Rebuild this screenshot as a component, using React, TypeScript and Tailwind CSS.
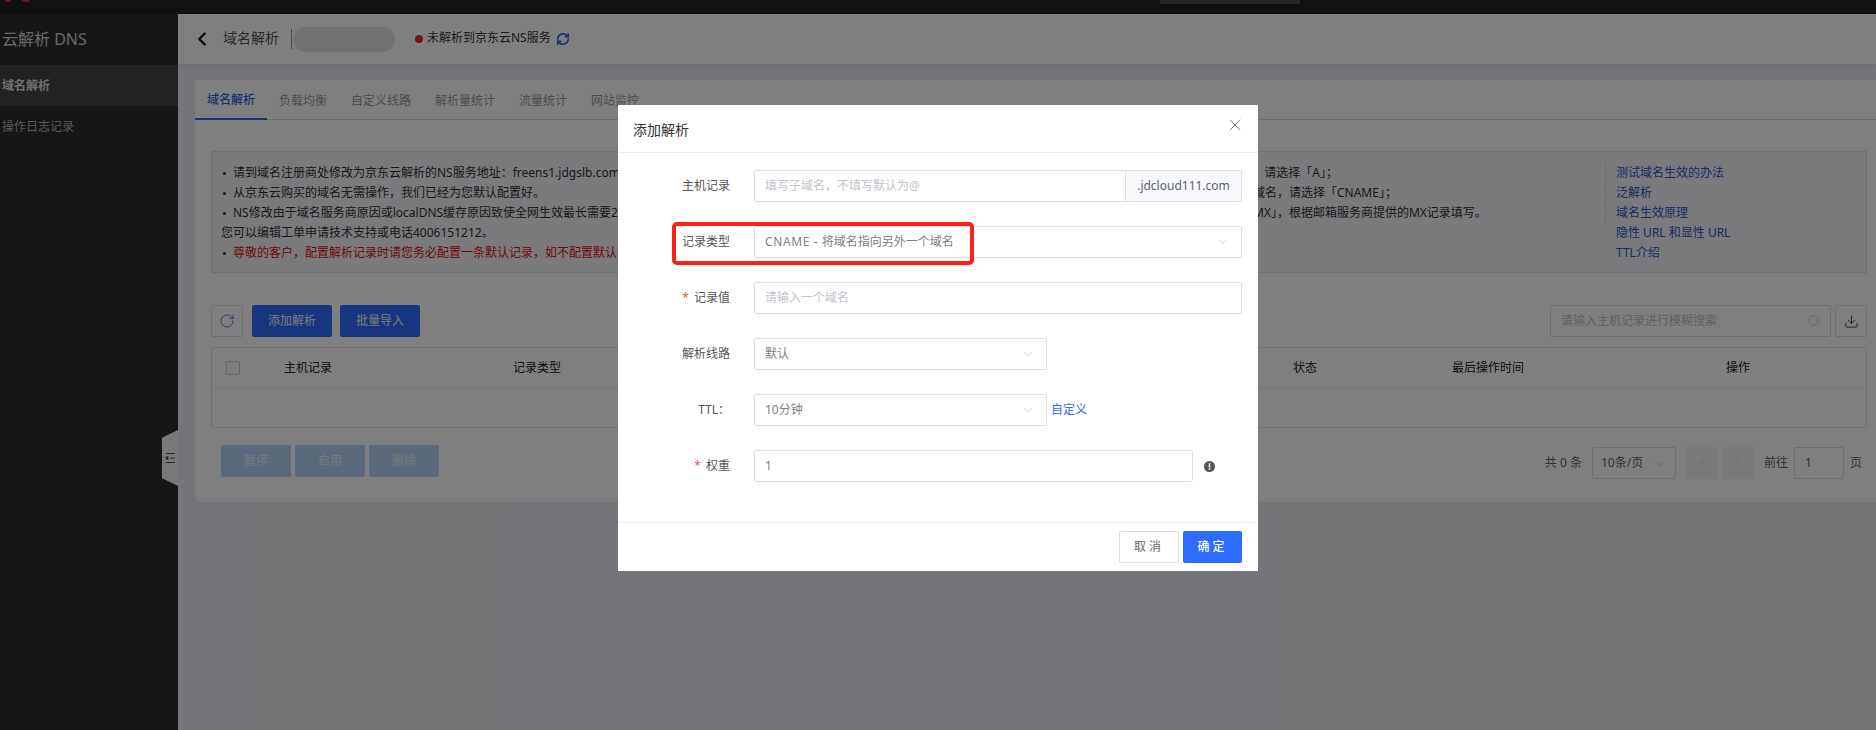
import { ChevronDown, ChevronLeft, ChevronRight, Download, RefreshCw, RotateCw, Search, X } from "lucide-react";

const tabs = ["域名解析", "负载均衡", "自定义线路", "解析量统计", "流量统计", "网站监控"];
const links = ["测试域名生效的办法", "泛解析", "域名生效原理", "隐性 URL 和显性 URL", "TTL介绍"];

function Bullet({ children, red }: { children: React.ReactNode; red?: boolean }) {
  return (
    <div className={red ? "flex h-5 items-center text-[#e01010]" : "flex h-5 items-center"}>
      <span className="mr-[7px] ml-[2px] h-[3px] w-[3px] shrink-0 rounded-full bg-[#333]" />
      <span>{children}</span>
    </div>
  );
}

function Row({ label, req, children }: { label: string; req?: boolean; children: React.ReactNode }) {
  return (
    <div className="flex h-8 items-center">
      <div className="flex w-[112px] shrink-0 items-center justify-end text-[#555]">
        {req && <span className="mr-[5px] text-[#f5534f]">*</span>}
        {label}
      </div>
      <div className="ml-6 flex flex-1 items-center">{children}</div>
    </div>
  );
}

function Select({ children, className }: { children: React.ReactNode; className: string }) {
  return (
    <div className={`flex h-8 items-center justify-between rounded-[2px] border border-[#dcdfe6] pr-[11px] pl-[10px] text-[#808080] ${className}`}>
      <span>{children}</span>
      <ChevronDown size={14} strokeWidth={1} className="text-[#b0b4bc]" />
    </div>
  );
}

export default function App() {
  return (
    <div className="relative h-[730px] w-[1876px] overflow-hidden bg-[#e9ebf0] font-['Noto_Sans','Noto_Sans_CJK_SC',sans-serif] text-xs text-[#333]">
      {/* top bar */}
      <div className="relative flex h-[14px] items-start bg-[#222]">
        <span className="ml-[5px] h-[2px] w-[6px] rounded-b-full bg-[#e03030]" />
        <span className="ml-[11px] h-[2px] w-[8px] rounded-b-full bg-[#e03030]" />
        <span className="ml-[1130px] h-[4px] w-[140px] bg-[#4a4a4a]" />
      </div>

      <div className="flex h-[716px]">
        {/* sidebar */}
        <aside className="relative w-[178px] shrink-0 bg-[#2c2c2c] text-[#c4c4c4]">
          <div className="flex h-[51px] items-center pb-[2px] pl-[2px] text-base text-[#d0d0d0]">云解析 DNS</div>
          <div className="flex h-[41px] items-center bg-[#444] pl-[2px] font-bold text-[#e0e0e0]">域名解析</div>
          <div className="flex h-[41px] items-center pl-[2px] text-[#b0b0b0]">操作日志记录</div>
          <div className="absolute top-[416px] right-0 flex h-[56px] w-[16px] items-center justify-center bg-[#f0f0f0] [clip-path:polygon(100%_0,100%_100%,0_86%,0_14%)]">
            <svg width="11" height="12" viewBox="0 0 11 12" fill="none" stroke="#555" strokeWidth="1.2">
              <path d="M1 1.5h9M5 6h5M1 10.5h9M1 6h3M3 4.2 1 6l2 1.8" />
            </svg>
          </div>
        </aside>

        <main className="min-w-0 flex-1">
          {/* header */}
          <header className="flex h-[50px] items-center bg-white pl-[13px] shadow-[0_4px_10px_rgba(0,0,0,0.08)]">
            <ChevronLeft size={22} strokeWidth={2.6} className="shrink-0 text-[#111]" />
            <span className="mb-[2px] ml-[10px] text-sm text-[#555]">域名解析</span>
            <span className="ml-3 h-5 w-px bg-[#999]" />
            <span className="ml-[1px] h-[25px] w-[102px] rounded-full bg-[#e4e4e4]" />
            <span className="ml-5 h-2 w-2 rounded-full bg-[#e8262d]" />
            <span className="mb-[2px] ml-1">未解析到京东云NS服务</span>
            <RefreshCw size={14} strokeWidth={3} className="ml-[5px] text-[#3a66d0]" />
          </header>

          {/* card */}
          <section className="mt-4 ml-[16px] h-[423px] rounded-bl-md border-b border-l border-[#e6e6e6] bg-white">
            <div className="flex h-[40px] border-b border-[#d8d8d8] bg-[#fff]">
              {tabs.map((t, i) => (
                <div key={t} className={i === 0 ? "-mb-px flex items-center border-b-2 border-[#2f66e8] px-3 pt-[2px] font-medium text-[#2f5fd8]" : "flex items-center px-3 pt-[2px] text-[#999]"}>
                  {t}
                </div>
              ))}
            </div>

            <div className="pt-[31px] pr-[9px] pl-[16px]">
              <div className="flex h-[122px] border border-[#dde0e8] bg-[#f4f5f8] pt-[11px] pl-[9px] whitespace-nowrap">
                <div className="w-[852px] shrink-0 overflow-hidden">
                  <Bullet>请到域名注册商处修改为京东云解析的NS服务地址：freens1.jdgslb.com，freens2.jdgslb.com；</Bullet>
                  <Bullet>从京东云购买的域名无需操作，我们已经为您默认配置好。</Bullet>
                  <Bullet>NS修改由于域名服务商原因或localDNS缓存原因致使全网生效最长需要24小时，请耐心等待；</Bullet>
                  <div className="flex h-5 items-center">您可以编辑工单申请技术支持或电话4006151212。</div>
                  <Bullet red>尊敬的客户，配置解析记录时请您务必配置一条默认记录，如不配置默认记录部分网络可能无法访问。</Bullet>
                </div>
                <div className="w-[532px] shrink-0">
                  <div className="flex h-5 items-center">如果您需要将域名指向一个IP地址，请选择「A」；</div>
                  <div className="flex h-5 items-center">如果您需要将主机名指向另外一个域名，请选择「CNAME」；</div>
                  <div className="flex h-5 items-center">如果需要设置企业邮箱，请选择「MX」，根据邮箱服务商提供的MX记录填写。</div>
                </div>
                <div className="mt-[1px] h-[60px] border-l border-dashed border-[#cfd2d8]" />
                <div className="ml-[10px] text-[#3354c8]">
                  {links.map((l) => (
                    <div key={l} className="flex h-5 items-center">{l}</div>
                  ))}
                </div>
              </div>

              {/* toolbar */}
              <div className="mt-[32px] flex h-8 items-center">
                <div className="flex h-8 w-8 items-center justify-center rounded-[2px] border border-[#dcdfe6]">
                  <RotateCw size={16} strokeWidth={1.2} className="text-[#3a5fd8]" />
                </div>
                <button className="ml-[9px] h-8 w-20 rounded-[2px] bg-[#2e6cff] text-[#f2f2f2]">添加解析</button>
                <button className="ml-2 h-8 w-20 rounded-[2px] bg-[#2e6cff] text-[#f2f2f2]">批量导入</button>
                <div className="ml-auto flex h-8 w-[281px] items-center justify-between rounded-[2px] border border-[#dcdfe6] pr-[9px] pl-[10px] text-[#c0c4cc]">
                  <span>请输入主机记录进行模糊搜索</span>
                  <Search size={14} strokeWidth={1} className="text-[#bbb]" />
                </div>
                <div className="ml-1 flex h-8 w-8 items-center justify-center rounded-[2px] border border-[#dcdfe6]">
                  <Download size={15} strokeWidth={1.5} className="text-[#444]" />
                </div>
              </div>

              {/* table */}
              <div className="mt-[10px] h-[81px] rounded-[2px] border border-[#e2e2e2]">
                <div className="grid h-[41px] grid-cols-[72px_229px_780px_159px_274px_1fr] items-center border-b border-[#ececec] text-[#222]">
                  <span className="ml-[14px] h-[14px] w-[14px] rounded-[2px] border border-[#ccc]" />
                  <span>主机记录</span>
                  <span>记录类型</span>
                  <span>状态</span>
                  <span>最后操作时间</span>
                  <span>操作</span>
                </div>
              </div>

              {/* footer */}
              <div className="mt-[17px] flex h-8 items-start justify-between pl-[10px]">
                <div className="flex gap-1">
                  {["暂停", "启用", "删除"].map((t) => (
                    <button key={t} className="h-8 w-[70px] rounded-[2px] bg-[#b8d2fb] text-[#eef2f8]">{t}</button>
                  ))}
                </div>
                <div className="mt-[2px] flex h-8 items-center pr-[5px] text-[#666]">
                  <span>共 0 条</span>
                  <div className="ml-[10px] flex h-8 w-[84px] items-center justify-between rounded-[2px] border border-[#dcdfe6] pr-[9px] pl-2">
                    <span>10条/页</span>
                    <ChevronDown size={13} strokeWidth={1} className="text-[#aaa]" />
                  </div>
                  <div className="ml-[10px] flex h-8 w-8 items-center justify-center rounded-[2px] bg-[#f4f4f5]">
                    <ChevronLeft size={14} strokeWidth={1} className="text-[#c0c4cc]" />
                  </div>
                  <div className="ml-1 flex h-8 w-8 items-center justify-center rounded-[2px] bg-[#f4f4f5]">
                    <ChevronRight size={14} strokeWidth={1} className="text-[#c0c4cc]" />
                  </div>
                  <span className="ml-[10px]">前往</span>
                  <div className="ml-[6px] flex h-8 w-[50px] items-center rounded-[2px] border border-[#dcdfe6] pl-[10px]">1</div>
                  <span className="ml-[6px]">页</span>
                </div>
              </div>
            </div>
          </section>
        </main>
      </div>

      {/* mask */}
      <div className="absolute inset-0 bg-black/50" />

      {/* modal */}
      <div className="absolute top-[105px] left-[618px] flex h-[466px] w-[640px] flex-col bg-white">
        <div className="flex h-[48px] items-center justify-between border-b border-[#eceef2] pr-[13px] pl-[15px] text-sm text-[#333]">
          <span className="mt-[3px]">添加解析</span>
          <X size={20} strokeWidth={0.9} className="-mt-2 text-[#555]" />
        </div>

        <div className="flex flex-1 flex-col gap-6 pt-[17px] pr-[16px]">
          <Row label="主机记录">
            <div className="flex h-8 w-[488px] rounded-[2px] border border-[#dcdfe6]">
              <div className="flex flex-1 items-center pl-[10px] text-[#c0c4cc]">填写子域名，不填写默认为@</div>
              <div className="flex w-[116px] items-center justify-center border-l border-[#dcdfe6] bg-[#f8f9fc] text-[#606266]">.jdcloud111.com</div>
            </div>
          </Row>
          <Row label="记录类型">
            <Select className="w-[488px]">
              <span className="tracking-[0.6px]">CNAME - </span>将域名指向另外一个域名
            </Select>
          </Row>
          <Row label="记录值" req>
            <div className="flex h-8 w-[488px] items-center rounded-[2px] border border-[#dcdfe6] pl-[10px] text-[#c0c4cc]">请输入一个域名</div>
          </Row>
          <Row label="解析线路">
            <Select className="w-[293px]">默认</Select>
          </Row>
          <Row label="TTL：">
            <Select className="w-[293px]">10分钟</Select>
            <span className="ml-1 text-[#2f6bf0]">自定义</span>
          </Row>
          <Row label="权重" req>
            <div className="flex h-8 w-[439px] items-center rounded-[2px] border border-[#dcdfe6] pl-[10px] text-[#808080]">1</div>
            <svg width="11" height="11" viewBox="0 0 11 11" className="ml-[11px]">
              <circle cx="5.5" cy="5.5" r="5.5" fill="#555" />
              <rect x="4.7" y="2.2" width="1.6" height="4.2" fill="#fff" />
              <rect x="4.7" y="7.2" width="1.6" height="1.6" fill="#fff" />
            </svg>
          </Row>
        </div>

        <div className="flex h-[49px] items-start justify-end gap-1 border-t border-[#eceef2] pt-2 pr-[16px]">
          <button className="h-8 w-[60px] rounded-[2px] border border-[#dcdfe6] tracking-[3px] text-[#666]">取消</button>
          <button className="h-8 w-[59px] rounded-[2px] bg-[#2e6bff] font-medium tracking-[3px] text-white">确定</button>
        </div>
      </div>

      {/* red annotation */}
      <div className="absolute top-[222px] left-[672px] h-[43px] w-[302px] rounded-[5px] border-[4px] border-[#ff2015]" />
    </div>
  );
}
